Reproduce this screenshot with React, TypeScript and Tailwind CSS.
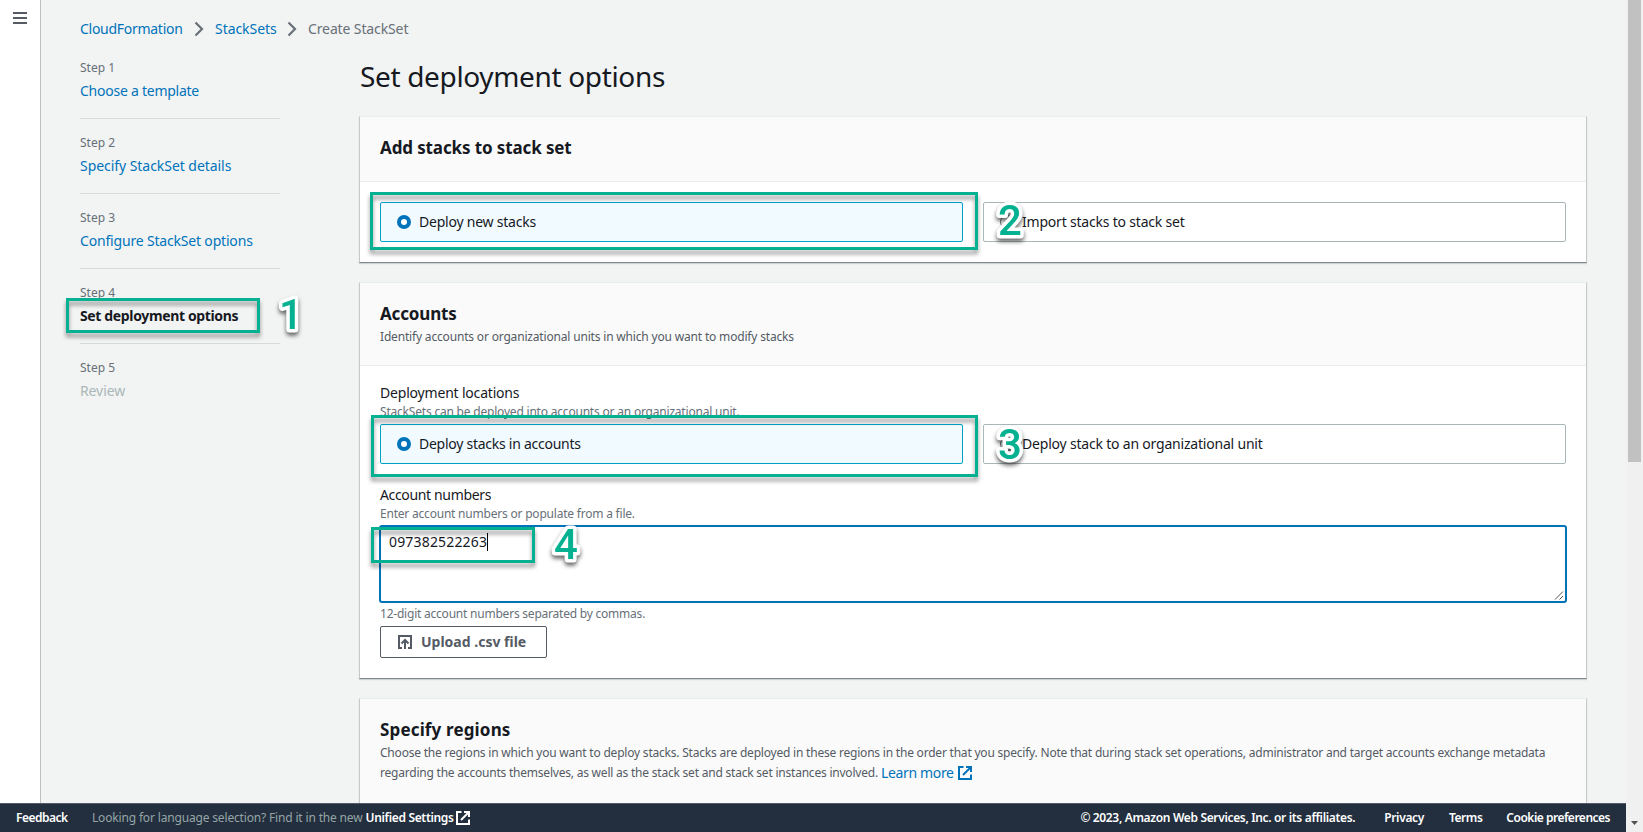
import type { ReactNode } from "react";

const steps = [
  { n: "Step 1", label: "Choose a template", cls: "text-[#0073bb] tracking-[-0.25px]" },
  { n: "Step 2", label: "Specify StackSet details", cls: "text-[#0073bb] tracking-[-0.05px]" },
  { n: "Step 3", label: "Configure StackSet options", cls: "text-[#0073bb] tracking-[-0.18px]" },
  { n: "Step 4", label: "Set deployment options", cls: "font-bold text-[#16191f] tracking-[-0.36px]" },
  { n: "Step 5", label: "Review", cls: "text-[#aab7b8] tracking-[-0.1px]" },
];

function Chevron() {
  return (
    <svg width="10" height="16" viewBox="0 0 10 16" className="shrink-0" fill="none" stroke="#687078" strokeWidth="2.2">
      <path d="M1.5 1.5 8 8l-6.5 6.5" />
    </svg>
  );
}

function ExternalIcon() {
  return (
    <svg width="16" height="16" viewBox="0 0 16 16" className="shrink-0" fill="none" stroke="currentColor" strokeWidth="2">
      <path d="M6.5 2H2v12h12V9.5" />
      <path d="M9 2h5v5" />
      <path d="M6 10l7.5-7.5" />
    </svg>
  );
}

function Card({ title, titleCls, description, children }: { title: string; titleCls: string; description?: ReactNode; children?: ReactNode }) {
  return (
    <section className="-mx-px mb-[19px] border border-x-[#c4c9c9] border-t-[#eaeded] border-b-[#7f8c8f] bg-white shadow-[0_1px_1px_0_rgba(0,28,36,0.15)]">
      <header className="border-b border-[#eaeded] bg-[#fafafa] px-5 pt-5">
        <h2 className={"text-[17px] leading-[22px] font-bold text-[#16191f] " + titleCls}>{title}</h2>
        {description ? <div className="pt-[2px] pb-[18px] text-xs leading-5 text-[#545b64]">{description}</div> : <div className="h-[22px]" />}
      </header>
      {children}
    </section>
  );
}

function Tile({ label, cls, selected }: { label: string; cls: string; selected?: boolean }) {
  return (
    <div
      className={
        "flex h-10 flex-1 items-center gap-2 rounded-[2px] border pl-4 text-sm text-[#16191f] " +
        (selected ? "border-[#00a1c9] bg-[#f1faff]" : "border-[#aab7b8] bg-white")
      }
    >
      <span className={"size-[14px] rounded-full bg-white " + (selected ? "border-4 border-[#0073bb]" : "border border-[#687078]")} />
      <span className={cls}>{label}</span>
    </div>
  );
}

function Highlight({ cls }: { cls: string }) {
  return <div className={"absolute border-3 border-[#06b191] drop-shadow-[0_4px_2px_rgba(0,0,0,0.42)] " + cls} />;
}

function Marker({ n, cls }: { n: string; cls: string }) {
  return (
    <svg width="40" height="50" viewBox="0 0 40 50" className={"absolute overflow-visible drop-shadow-[0_3px_2px_rgba(0,0,0,0.6)] " + cls}>
      <text
        x="8"
        y="40"
        fontFamily="Roboto, sans-serif"
        fontSize="42"
        fontWeight="500"
        fill="#06b191"
        stroke="#fff"
        strokeWidth="7"
        strokeLinejoin="round"
        paintOrder="stroke"
      >
        {n}
      </text>
    </svg>
  );
}

export default function App() {
  return (
    <div className="relative flex h-[832px] w-[1643px] overflow-hidden bg-[#f2f3f3] font-['Noto_Sans','Open_Sans',sans-serif] whitespace-nowrap">
      <div className="flex h-full w-[1626px] flex-col">
        <div className="flex min-h-0 flex-1">
          <aside className="flex w-[41px] shrink-0 flex-col gap-[3px] border-r border-[#bbc0c1] bg-white pt-3 pl-[13px]">
            <span className="h-[2px] w-[14px] bg-[#545b64]" />
            <span className="h-[2px] w-[14px] bg-[#545b64]" />
            <span className="h-[2px] w-[14px] bg-[#545b64]" />
          </aside>

          <div className="flex flex-1 flex-col overflow-hidden pt-[18px] pl-[39px]">
            <nav className="flex h-[22px] shrink-0 items-center text-sm text-[#0073bb]">
              <span className="w-[114px] tracking-[-0.28px]">CloudFormation</span>
              <Chevron />
              <span className="ml-[11px] w-[62px] tracking-[-0.05px]">StackSets</span>
              <span className="ml-[10px] flex">
                <Chevron />
              </span>
              <span className="ml-[11px] tracking-[-0.12px] text-[#687078]">Create StackSet</span>
            </nav>

            <div className="flex shrink-0">
              <ol className="w-[200px] shrink-0 pt-[17px]">
                {steps.map((s, i) => (
                  <li key={s.n} className={"mb-[13px] flex flex-col gap-px pb-4 " + (i < 4 ? "border-b border-[#d5dbdb]" : "")}>
                    <span className="text-xs leading-[22px] text-[#687078]">{s.n}</span>
                    <span className={"text-sm leading-[22px] " + s.cls}>{s.label}</span>
                  </li>
                ))}
              </ol>

              <main className="ml-20 w-[1226px] pt-[18px]">
                <h1 className="mb-[22px] text-[28px] leading-9 tracking-[-0.34px] text-[#16191f]">Set deployment options</h1>

                <Card title="Add stacks to stack set" titleCls="tracking-[-0.12px]">
                  <div className="flex gap-5 p-5">
                    <Tile selected label="Deploy new stacks" cls="tracking-[-0.22px]" />
                    <Tile label="Import stacks to stack set" cls="tracking-[-0.2px]" />
                  </div>
                </Card>

                <Card
                  title="Accounts"
                  titleCls="tracking-[-0.17px]"
                  description={
                    <p className="tracking-[-0.175px]">Identify accounts or organizational units in which you want to modify stacks</p>
                  }
                >
                  <div className="px-5 pt-4 pb-5">
                    <div className="text-sm leading-[21px] tracking-[-0.19px] text-[#16191f]">Deployment locations</div>
                    <div className="pt-px text-xs leading-4 tracking-[-0.2px] text-[#687078]">
                      StackSets can be deployed into accounts or an organizational unit.
                    </div>
                    <div className="mt-1 flex gap-5">
                      <Tile selected label="Deploy stacks in accounts" cls="tracking-[-0.26px]" />
                      <Tile label="Deploy stack to an organizational unit" cls="tracking-[-0.2px]" />
                    </div>
                    <div className="mt-5 text-sm leading-[21px] tracking-[-0.35px] text-[#16191f]">Account numbers</div>
                    <div className="pt-px text-xs leading-4 tracking-[-0.21px] text-[#687078]">Enter account numbers or populate from a file.</div>
                    <div className="-mx-px mt-[3px] flex h-[78px] justify-between rounded-[3px] border-2 border-[#0073bb] bg-white pt-1 pl-2">
                      <div className="flex h-[22px] items-center text-sm tracking-[0.17px] text-[#16191f]">
                        097382522263
                        <span className="h-[18px] w-px bg-black" />
                      </div>
                      <svg width="10" height="10" viewBox="0 0 10 10" className="mr-px mb-px self-end" stroke="#555" strokeWidth="1">
                        <path d="M1 9.5 9 1.5M5.500 9.500 9 6" />
                      </svg>
                    </div>
                    <div className="mt-[3px] text-xs leading-4 tracking-[-0.22px] text-[#687078]">12-digit account numbers separated by commas.</div>
                    <button className="mt-1 flex h-8 w-[167px] items-center gap-2 rounded-[2px] border border-[#545b64] bg-white pl-4 text-sm font-bold text-[#545b64]">
                      <svg width="16" height="16" viewBox="0 0 16 16" fill="none" stroke="currentColor" strokeWidth="2">
                        <path d="M5 14H2V2h12v12h-3" />
                        <path d="M8 15V6.500" />
                        <path d="M4.500 9.500 8 6l3.500 3.500" />
                      </svg>
                      Upload .csv file
                    </button>
                  </div>
                </Card>

                <Card
                  title="Specify regions"
                  titleCls="tracking-[0.15px]"
                  description={
                    <div className="pb-5">
                      <p className="tracking-[-0.21px]">
                        Choose the regions in which you want to deploy stacks. Stacks are deployed in these regions in the order that you specify. Note that
                        during stack set operations, administrator and target accounts exchange metadata
                      </p>
                      <p className="flex">
                        <span className="w-[501px] tracking-[-0.215px]">
                          regarding the accounts themselves, as well as the stack set and stack set instances involved.
                        </span>
                        <a className="flex items-center gap-[3px] text-sm leading-5 tracking-[-0.35px] text-[#0073bb]">
                          Learn more <ExternalIcon />
                        </a>
                      </p>
                    </div>
                  }
                />
              </main>
            </div>
          </div>
        </div>

        <footer className="z-10 flex h-[29px] shrink-0 items-center border-t border-[#545b64] bg-[#232f3e] pr-4 pl-4 text-xs font-semibold text-white">
          <span className="w-[76px] tracking-[-0.5px]">Feedback</span>
          <span className="mr-[3px] font-normal tracking-[-0.165px] text-[#95a5a6]">Looking for language selection? Find it in the new</span>
          <span className="mr-px tracking-[-0.33px]">Unified Settings</span>
          <ExternalIcon />
          <span className="ml-auto tracking-[-0.34px]">© 2023, Amazon Web Services, Inc. or its affiliates.</span>
          <span className="ml-[29px] tracking-[-0.35px]">Privacy</span>
          <span className="ml-[25px] tracking-[-0.45px]">Terms</span>
          <span className="ml-6 tracking-[-0.5px]">Cookie preferences</span>
        </footer>
      </div>

      <div className="flex w-[17px] flex-col items-center justify-between bg-[#f0f0f0] pb-[7px]">
        <div className="h-[462px] w-[13px] bg-[#c1c1c1]" />
        <svg width="7" height="4" viewBox="0 0 7 4" fill="#505050">
          <path d="M0 0h7L3.500 4z" />
        </svg>
      </div>

      <Highlight cls="left-[66px] top-[298px] h-[35px] w-[194px]" />
      <Highlight cls="left-[370px] top-[192px] h-[58px] w-[608px]" />
      <Highlight cls="left-[371px] top-[415px] h-[62px] w-[607px]" />
      <Highlight cls="left-[371px] top-[527px] h-[36px] w-[164px]" />
      <Marker n="1" cls="left-[271px] top-[289px]" />
      <Marker n="2" cls="left-[990px] top-[195px]" />
      <Marker n="3" cls="left-[990px] top-[419px]" />
      <Marker n="4" cls="left-[546px] top-[519px]" />
    </div>
  );
}
